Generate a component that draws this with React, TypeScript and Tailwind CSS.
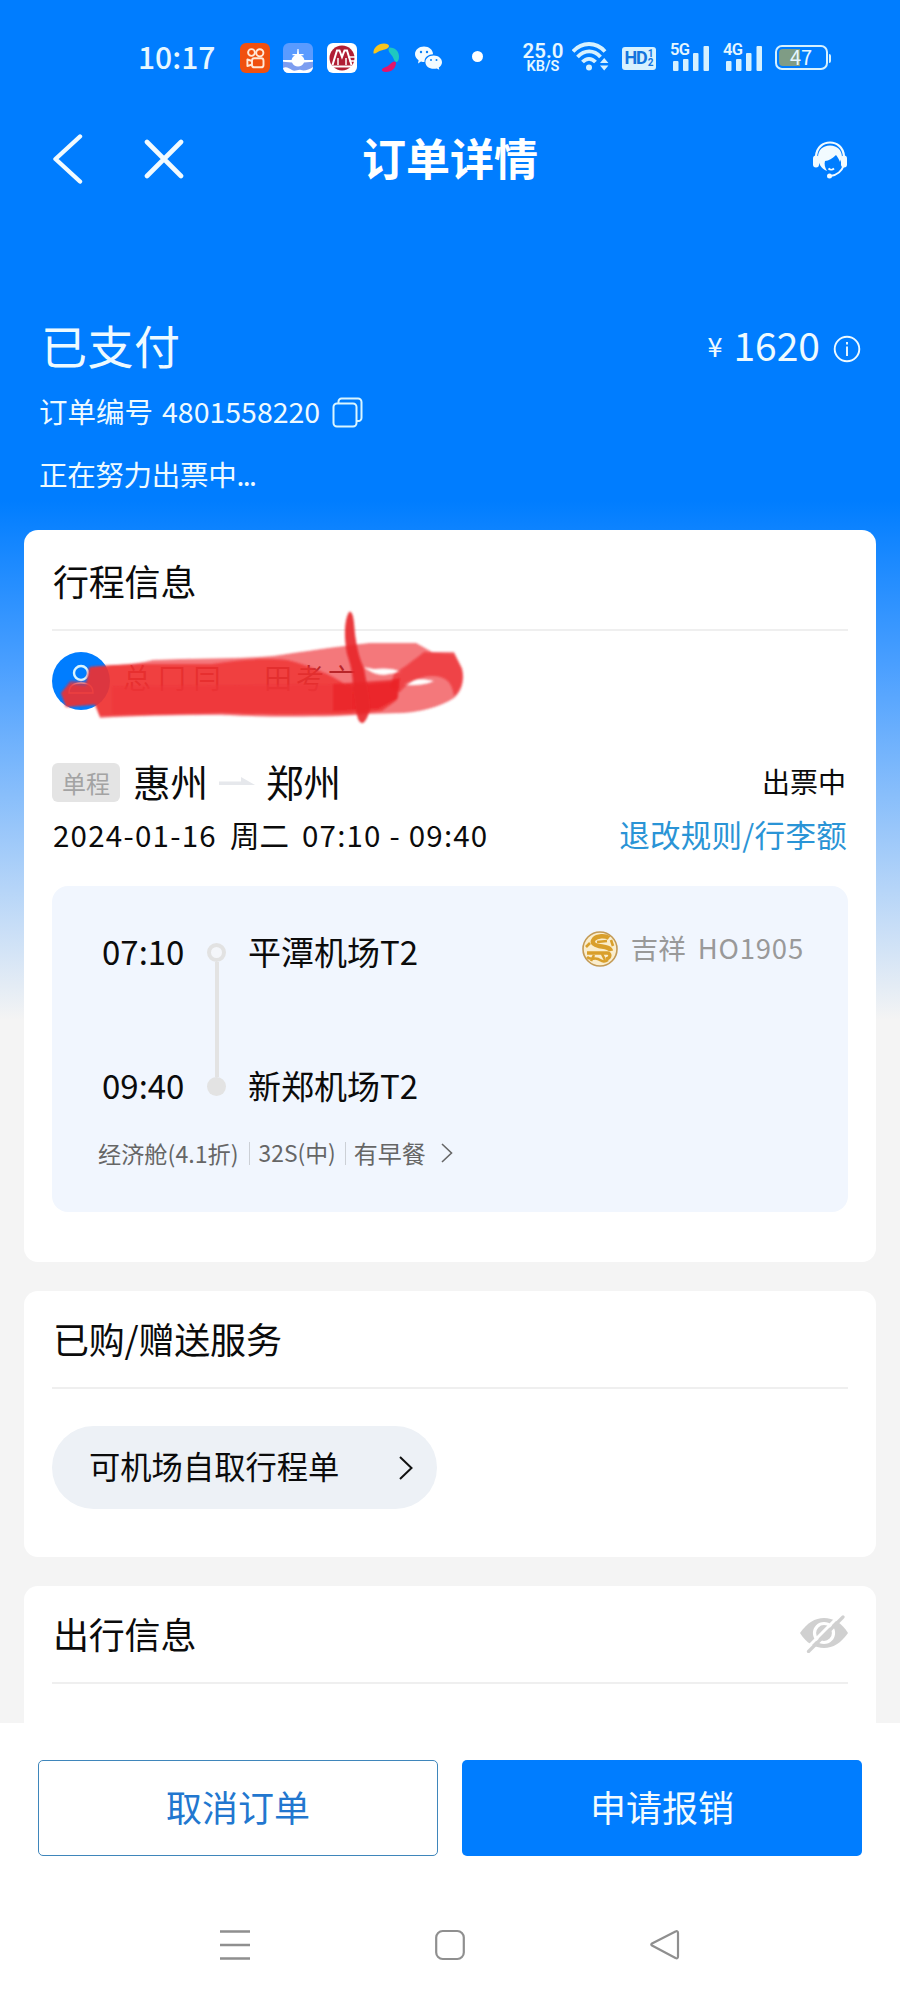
import React from 'react';

const StatusBar = () => {
    return (
        <div className="h-[116px] flex items-center text-[#e6f7ff]">
            <span className="ml-[138px] w-[102px] text-[30px] leading-[30px] font-medium mt-[-5px]">10:17</span>
            <svg width="30" height="30" viewBox="0 0 30 30" className="mr-[13px] mt-[-1px]">
                <rect width="30" height="30" rx="6" fill="#f0500f" />
                <g fill="none" stroke="#ffe9d8" strokeWidth="1.9">
                    <circle cx="11.5" cy="9.5" r="3.4" />
                    <circle cx="19.8" cy="9.8" r="3.6" />
                    <rect x="12" y="15.3" width="11.5" height="9" rx="2.4" />
                    <path d="M12 18l-4.6-1.5v6.6L12 21.5" strokeLinejoin="round" />
                </g>
            </svg>
            <svg width="30" height="30" viewBox="0 0 30 30" className="mr-[14px] mt-[-1px]">
                <rect width="30" height="30" rx="6" fill="#5a9bff" />
                <path d="M0 19h30v5a6 6 0 0 1-6 6H6a6 6 0 0 1-6-6z" fill="#7d9df0" />
                <path d="M0 25c3-2 6 0 9 2s6-1 9 0 8 0 12-3a6 6 0 0 1-6 6H6a6 6 0 0 1-6-5z" fill="#fff" />
                <path d="M14.4 6h1.200l.4 5h4.500v1.300H18c1.800 1 3 2.700 3.400 4.700H30v1.800l-9 .7C20 22 17.500 23.500 15 23.500S10 22 9 19.500l-9-.7V17h8.600c.4-2 1.600-3.700 3.400-4.700H9.500V11H14z" fill="#fff" />
            </svg>
            <svg width="30" height="30" viewBox="0 0 30 30" className="mr-[16px] mt-[-1px]">
                <rect width="30" height="30" rx="6" fill="#fff" />
                <circle cx="15" cy="15" r="12.5" fill="#b01e35" />
                <path d="M5.500 22L10 7.500h2.500L15 14l2.500-6.500H20L24.500 22M5 23.500h20" fill="none" stroke="#fff" strokeWidth="2" />
                <path d="M11 22v-7M19 22v-7M21 14h8M22.500 18h6" stroke="#fff" strokeWidth="1.5" />
            </svg>
            <svg width="26" height="30" viewBox="0 0 26 30" className="mr-[16px] mt-[-1px]">
                <path d="M.5 10.500C0 5 5 .5 11 .5c3 0 5 1 5 2.500 0 3-5 3.500-8 4.500S3 11 .5 10.500z" fill="#f7c51e" />
                <path d="M16.500 4.500c6 0 9.500 4 9.500 9 0 3-1 5.500-2.500 5.500-2 0-2.500-3-4-5.500s-6-6-3-9z" fill="#1fc8c0" />
                <path d="M23 19.500c0 5.500-4 9.500-10 9.500-3 0-4.500-1-4-2.500.8-2 4-2 6.500-4s5-6 7.500-3z" fill="#e2156b" />
            </svg>
            <svg width="27" height="24" viewBox="0 0 27 24" className="mr-[30px] mt-[-1px]">
                <path d="M9 .5c5 0 9 3.300 9 7.700-4.500 0-8.500 3-8.500 7.300v.6c-1.200 0-2.400-.1-3.500-.5l-3 1.800.6-3.200C1.500 12.800 0 10.600 0 8.200 0 3.800 4 .5 9 .5z" fill="#f2fbff" />
                <path d="M18.700 9.600c4.600 0 8.300 2.900 8.300 6.600 0 2.200-1.300 4-3.200 5.300l.5 2.300-2.500-1.400c-1 .3-2 .4-3.100.4-4.600 0-8.300-2.900-8.300-6.600s3.700-6.600 8.300-6.600z" fill="#f2fbff" />
                <g fill="#0a80f5">
                    <circle cx="6" cy="6" r="1.2" />
                    <circle cx="12" cy="6" r="1.2" />
                    <circle cx="16" cy="14" r="1" />
                    <circle cx="21.5" cy="14" r="1" />
                </g>
            </svg>
            <span className="w-[11px] h-[11px] rounded-full bg-white mt-[-3px]"></span>
            <div className="ml-[38px] mt-[-1px] w-[44px] flex flex-col items-center whitespace-nowrap font-[Roboto,sans-serif]">
                <span className="text-[20.5px] leading-[18px] font-semibold">25.0</span>
                <span className="text-[14.5px] leading-[14px] font-semibold">KB/S</span>
            </div>
            <svg width="37" height="29" viewBox="0 0 37 29" className="ml-[7px] mr-[13px] mt-[-3px]">
                <g fill="none" stroke="#d6f1ff" strokeWidth="3.8">
                    <path d="M1 9.500C10-.5 24-.5 33 9.500" />
                    <path d="M5.500 15C12.500 7.500 22 7.500 28.500 15" />
                    <path d="M10.500 20c4-4.300 9-4.300 13 0" />
                </g>
                <circle cx="17" cy="25.5" r="3" fill="#d6f1ff" />
                <path d="M28 21l4.200-5 4.200 5zM28 23.500l4.200 5 4.200-5z" fill="#d6f1ff" />
            </svg>
            <div className="w-[34px] h-[23px] rounded-[3px] bg-[#d6f1ff] text-[#1274dd] font-bold flex items-center justify-center font-[Roboto,sans-serif]">
                <span className="text-[18px] leading-[20px] tracking-[-1px]">HD</span>
                <span className="flex flex-col text-[10px] ml-[1px]">
                    <span className="leading-[9px]">1</span>
                    <span className="leading-[9px]">2</span>
                </span>
            </div>
            <Signal label="5G" />
            <Signal label="4G" />
            <div className="ml-[13px] w-[53px] h-[25px] rounded-[7px] border-2 border-[#d6f1ff] p-[2px] flex relative mt-[-1px]">
                <span className="w-[21px] h-full rounded-l-[4px] bg-[#7f9c85]"></span>
                <span className="absolute left-[13px] top-[1px] text-[20px] leading-[18px]">47</span>
            </div>
            <span className="w-[2px] h-[9px] ml-[1px] rounded-r bg-[#d6f1ff]"></span>
        </div>
    );
};

const Signal = ({ label }: { label: string }) => {
    return (
        <div className="relative ml-[14px] mt-[-3px] w-[39px] h-[28px]">
            <span className="absolute left-0 top-0 text-[16.5px] leading-[14px] tracking-[-0.8px] font-semibold font-[Roboto,sans-serif]">{label}</span>
            <svg width="39" height="28" viewBox="0 0 39 28" fill="#d6f1ff">
                <rect x="3" y="18" width="5.5" height="10" rx="1" />
                <rect x="13" y="16" width="5.5" height="12" rx="1" />
                <rect x="23" y="10" width="5.5" height="18" rx="1" />
                <rect x="33.5" y="3" width="5.5" height="25" rx="1" />
            </svg>
        </div>
    );
};

const NavBar = () => {
    return (
        <div className="h-[88px] flex items-center justify-between pl-[52px] pr-[52px]">
            <div className="flex items-center w-[200px] mt-[-2px]">
                <svg width="31" height="50" viewBox="0 0 31 50" fill="none" stroke="#f2fbff" strokeWidth="4.4" strokeLinecap="round" strokeLinejoin="round">
                    <path d="M28 2.500L3.500 25 28 47.500" />
                </svg>
                <svg width="42" height="40" viewBox="0 0 42 40" fill="none" stroke="#f2fbff" strokeWidth="4.6" strokeLinecap="round" className="ml-[60px]">
                    <path d="M4 3l34 34M38 3L4 37" />
                </svg>
            </div>
            <h1 className="text-[44px] leading-[50px] font-bold text-white mt-[-6px]">订单详情</h1>
            <div className="w-[200px] flex justify-end">
                <svg width="36" height="38" viewBox="0 0 36 38">
                    <path d="M4 15C5 6 11 1.500 18 1.500S31 6 32 15" fill="none" stroke="#f2fbff" strokeWidth="2.2" />
                    <path d="M18 4.500c7.500 0 12 5 12 11.500l-2 5c-1-3-2.500-5-4-7-4 4-7 5.500-11 6-1 3 0 7 2 10C9 28 6 22 6 16 6 9.500 10.500 4.500 18 4.500z" fill="#f2fbff" />
                    <rect x="1" y="14.5" width="6" height="12" rx="3" fill="#f2fbff" />
                    <rect x="29" y="14.5" width="6" height="12" rx="3" fill="#f2fbff" />
                    <path d="M31.500 25c-2 5.500-6.500 9-13 10" fill="none" stroke="#f2fbff" strokeWidth="2" />
                    <path d="M16.500 27.500c1.500 1.500 4 1.500 5.500 0" fill="none" stroke="#f2fbff" strokeWidth="1.8" />
                    <circle cx="17.5" cy="35" r="2.5" fill="#f2fbff" />
                </svg>
            </div>
        </div>
    );
};

const OrderSummary = () => {
    return (
        <div className="pt-[106px] h-[326px] pl-[39px] pr-[39px] text-[#eefaff]">
            <div className="h-[71px] flex items-start justify-between">
                <h2 className="text-[46px] leading-[68px] pl-[2px] tracking-[0.5px]">已支付</h2>
                <div className="flex items-center mt-[-2px]">
                    <span className="text-[27px] leading-[68px] pt-[4px]">¥</span>
                    <span className="text-[39px] leading-[68px] ml-[11px]">1620</span>
                    <svg width="28" height="28" viewBox="0 0 28 28" className="ml-[13px] mt-[9px]" fill="none" stroke="#eefaff" strokeWidth="1.9">
                        <circle cx="14" cy="14" r="12.3" />
                        <path d="M14 11.500V21M14 7v2.400" />
                    </svg>
                </div>
            </div>
            <div className="h-[60px] flex items-center">
                <span className="text-[28.5px] leading-[60px]">订单编号</span>
                <span className="text-[28.5px] leading-[60px] ml-[9px]">4801558220</span>
                <svg width="31" height="31" viewBox="0 0 31 31" className="ml-[12px] mt-[2px]" fill="none" stroke="#d9f5ff" strokeWidth="2">
                    <rect x="1.5" y="6.5" width="23" height="23" rx="3.5" />
                    <path d="M6.500 6V4.500a3 3 0 0 1 3-3H26a3.500 3.500 0 0 1 3.500 3.500v16a3 3 0 0 1-3 3H25" />
                </svg>
            </div>
            <p className="text-[28.5px] leading-[66px] tracking-[-0.3px]">正在努力出票中<span className="tracking-[-1.6px]">...</span></p>
        </div>
    );
};

const CardTitle = ({ title, children }: { title: string, children?: React.ReactNode }) => {
    return (
        <div className="h-[98px] flex items-center justify-between border-b-2 border-[#efefef]">
            <h3 className="text-[36px] leading-[50px] text-[#0b0b0b] mt-[-3px] ml-[1px] tracking-[-0.2px]">{title}</h3>
            {children}
        </div>
    );
};

const Passengers = () => {
    return (
        <div className="relative h-[132px] pt-[21px]">
            <div className="flex items-start">
                <svg width="58" height="58" viewBox="0 0 58 58">
                    <circle cx="29" cy="29" r="29" fill="#007dff" />
                    <circle cx="29" cy="21" r="7" fill="none" stroke="#d9f5ff" strokeWidth="2.4" />
                    <path d="M17 41c0-7 4-10 12-10s12 3 12 10z" fill="none" stroke="#d9f5ff" strokeWidth="1.4" />
                </svg>
                <span className="ml-[13px] text-[28px] leading-[50px] tracking-[7px] text-[#8a2323]">总冂冃</span>
                <span className="ml-[36px] text-[28px] leading-[50px] tracking-[4px] text-[#5a1a1a]">田考亠</span>
            </div>
            {/* Marker strokes over the names */}
            <svg width="430" height="120" viewBox="0 0 430 120" className="absolute left-0 top-[-23px]">
                <defs>
                    <filter id="soft" x="-5%" y="-10%" width="110%" height="120%">
                        <feGaussianBlur stdDeviation="0.9" />
                    </filter>
                </defs>
                <g filter="url(#soft)">
                    <path d="M37 59C60 57 80 57 101 52C150 50 190 51 221 48C250 44 280 39 318 35L364 35L380 44L402 44L410 60C413 72 410 84 402 90C388 99 368 104 350 105L316 106C280 110 200 109 170 107C120 107 80 108 48 110L43 97L14 99L9 85L18 73L34 74ZM311 59C318 63 322 67 332 67L350 64C342 60 330 60 322 61ZM352 77C358 71 370 70 382 73C374 77 362 78 352 77Z" fill="#ee2b30" fillOpacity="0.64" fillRule="evenodd" />
                    <path d="M38 59L60 57L90 56L160 56C190 51 215 50 235 52C256 57 278 66 296 78L340 74L346 72L345 92L330 103L296 106C250 107 200 107 170 105C120 106 80 107 48 108L43 96L14 99L9 85L18 76L34 78Z" fill="#ef2f33" fillOpacity="0.78" />
                    <path d="M60 78L300 76L300 104L60 106Z" fill="#ee3538" fillOpacity="0.6" />
                    <path d="M342 66C354 58 362 52 372 44L402 46L410 62C412 72 409 82 402 88C400 74 394 68 380 68C366 68 354 76 348 84L338 80Z" fill="#ee2c30" fillOpacity="0.7" />
                    <path d="M281 76L338 72L348 70L346 90L326 101L281 103Z" fill="#e92126" fillOpacity="0.75" />
                    <path d="M297 4C301 2 302 12 303 26C305 40 307 50 312 60C314 74 319 92 318 102C314 114 311 117 308 114C304 110 304 98 301 82C301 66 299 58 295 46C292 30 292 12 297 4Z" fill="#e8262b" fillOpacity="0.92" />
                </g>
            </svg>
        </div>
    );
};

const Trip = () => {
    return (
        <div>
            <div className="h-[39px] flex items-center text-[#0b0b0b]">
                <span className="w-[68px] h-[39px] rounded-[6px] bg-[#e4e4e4] text-[#a3a3a3] text-[24px] leading-[39px] text-center">单程</span>
                <span className="ml-[13px] text-[37.5px] leading-[39px] mt-[-5px]">惠州</span>
                <svg width="36" height="10" viewBox="0 0 36 10" className="ml-[11px] mr-[11px] mt-[-4px]">
                    <path d="M0 5.500h22V1l14 8H0z" fill="#e6e8ec" />
                </svg>
                <span className="text-[37.5px] leading-[39px] mt-[-5px]">郑州</span>
                <span className="ml-auto text-[28px] leading-[39px] mt-[-3px] mr-[2px]">出票中</span>
            </div>
            <div className="h-[84px] flex items-start pt-[10px]">
                <span className="w-[177px] text-[29.5px] leading-[44px] text-[#0b0b0b] tracking-[1.25px] ml-[1px]">2024-01-16</span>
                <span className="w-[72px] text-[29.5px] leading-[44px] text-[#0b0b0b]">周二</span>
                <span className="text-[29.5px] leading-[44px] text-[#0b0b0b] tracking-[1.2px] whitespace-nowrap">07:10 - 09:40</span>
                <a className="ml-auto text-[30.5px] leading-[44px] text-[#2a94d6] tracking-[0.3px] mr-[1px]">退改规则/行李额</a>
            </div>
        </div>
    );
};

const FlightBox = () => {
    return (
        <div className="h-[326px] rounded-[16px] bg-[#f1f6fe] pl-[50px] pr-[44px] pt-[45px] text-[#0b0b0b]">
            <div className="flex">
                <div className="w-[100px] h-[178px] flex flex-col justify-between text-[33px] leading-[44px] mt-[-2px]">
                    <span>07:10</span>
                    <span>09:40</span>
                </div>
                <div className="w-[19px] mt-[12px] h-[153px] ml-[5px] flex flex-col items-center">
                    <span className="w-[19px] h-[19px] shrink-0 rounded-full border-[4px] border-[#e2e2e2] bg-[#f4f6fa]"></span>
                    <span className="w-[4px] flex-1 bg-[#e3e3e3]"></span>
                    <span className="w-[19px] h-[19px] shrink-0 rounded-full bg-[#e3e3e3]"></span>
                </div>
                <div className="ml-[22px] h-[178px] flex flex-col justify-between text-[33px] leading-[44px] mt-[-2px]">
                    <span>平潭机场T2</span>
                    <span>新郑机场T2</span>
                </div>
                <div className="ml-auto h-[36px] flex items-center text-[#999]">
                    <svg width="36" height="36" viewBox="0 0 36 36" fill="none">
                        <circle cx="18" cy="18" r="17" fill="#faedcd" stroke="#c39a55" strokeWidth="1.6" />
                        <path d="M27 7c-4-3-12-2-15 1-3 4 0 6 5 7s11 1 12 5" stroke="#d99f2b" strokeWidth="4.4" />
                        <path d="M5 22h20c4 0 4 5-1 6" stroke="#d99f2b" strokeWidth="3.4" />
                        <path d="M5 26c4 4 7 0 11 2s6 4 10 1M8 12l-4 4M15 11l10-1M29 9l2 6M12 24l-3 6M20 23l3 6" stroke="#d99f2b" strokeWidth="2.6" />
                    </svg>
                    <span className="ml-[13px] text-[27.5px] leading-[36px] mt-[-4px]">吉祥</span>
                    <span className="text-[27.5px] leading-[36px] ml-[12px] mt-[-4px] tracking-[0.8px]">HO1905</span>
                </div>
            </div>
            <div className="mt-[24px] h-[44px] flex items-center text-[23.2px] leading-[44px] text-[#666] ml-[-4px]">
                <span>经济舱(4.1折)</span>
                <span className="w-px h-[23px] bg-[#ccd0d6] ml-[10px] mr-[9px]"></span>
                <span className="text-[22.8px]">32S(中)</span>
                <span className="w-px h-[23px] bg-[#ccd0d6] ml-[9px] mr-[8px]"></span>
                <span className="text-[24px]">有早餐</span>
                <svg width="12" height="20" viewBox="0 0 12 20" className="ml-[15px]" fill="none" stroke="#666" strokeWidth="1.6">
                    <path d="M1 1l9.500 9L1 19" />
                </svg>
            </div>
        </div>
    );
};

const BottomBar = () => {
    return (
        <div className="h-[277px] bg-white">
            <div className="pt-[37px] px-[38px] flex gap-[24px] text-[36px]">
                <button className="w-[400px] h-[96px] pb-[4px] rounded-[5px] border border-[#3f86bb] text-[#2277cf]">取消订单</button>
                <button className="w-[400px] h-[96px] pb-[4px] rounded-[5px] bg-[#007dff] text-[#f2fbff]">申请报销</button>
            </div>
            {/* System navigation */}
            <div className="mt-[73px] px-[220px] flex items-center justify-between">
                <svg width="30" height="32" viewBox="0 0 30 32" stroke="#8f8f8f" strokeWidth="2.6">
                    <path d="M0 2.500h30M0 16h30M0 29.500h30" />
                </svg>
                <svg width="30" height="32" viewBox="0 0 30 32" fill="none" stroke="#8f8f8f" strokeWidth="2.2">
                    <rect x="1.2" y="2" width="27.6" height="28" rx="6.5" />
                </svg>
                <svg width="30" height="32" viewBox="0 0 30 32" fill="none" stroke="#8f8f8f" strokeWidth="2.2" strokeLinejoin="round">
                    <path d="M25.500 2.500L2 14.500q-1.500 1 0 2L25.500 29q2.500 1 2.500-1.500V4q0-2.500-2.500-1.500z" />
                </svg>
            </div>
        </div>
    );
};

const App = () => {
    return (
        <div className="w-[900px] h-[2000px] overflow-hidden flex flex-col bg-[#f4f4f4] bg-[linear-gradient(180deg,#007dff_0px,#007dff_500px,#4a9fff_665px,#f4f4f4_1020px)] font-['Noto_Sans_CJK_SC',sans-serif]">
            <StatusBar />
            <NavBar />
            <OrderSummary />
            <div className="flex-1 px-[24px] flex flex-col gap-[29px] overflow-hidden">
                <section className="shrink-0 h-[732px] rounded-[14px] bg-white px-[28px] pt-[3px]">
                    <CardTitle title="行程信息" />
                    <Passengers />
                    <Trip />
                    <FlightBox />
                </section>
                <section className="shrink-0 h-[266px] rounded-[14px] bg-white px-[28px]">
                    <CardTitle title="已购/赠送服务" />
                    <button className="mt-[37px] w-[385px] h-[83px] rounded-full bg-[#edf1f6] pl-[37px] pr-[24px] flex items-center justify-between text-[31.3px] text-[#0b0b0b]">
                        <span className="mt-[-2px]">可机场自取行程单</span>
                        <svg width="14" height="24" viewBox="0 0 14 24" fill="none" stroke="#111" strokeWidth="2">
                            <path d="M1 1l11.500 11L1 23" />
                        </svg>
                    </button>
                </section>
                <section className="shrink-0 h-[137px] rounded-t-[14px] bg-white px-[28px]">
                    <CardTitle title="出行信息">
                        <svg width="48" height="38" viewBox="0 0 48 38">
                            <path d="M0 18C7 8 15 3 24 3s18 5 24 15c-7 10-15 15-24 15S6 28 0 18z" fill="#d0d0d0" />
                            <circle cx="24" cy="18" r="9.5" fill="none" stroke="#fff" strokeWidth="3.2" />
                            <path d="M6 34L40 0" stroke="#fff" strokeWidth="3" />
                            <path d="M8.500 36.500L43 2" stroke="#d0d0d0" strokeWidth="3.2" strokeLinecap="round" />
                        </svg>
                    </CardTitle>
                </section>
            </div>
            <BottomBar />
        </div>
    );
};

export default App;
